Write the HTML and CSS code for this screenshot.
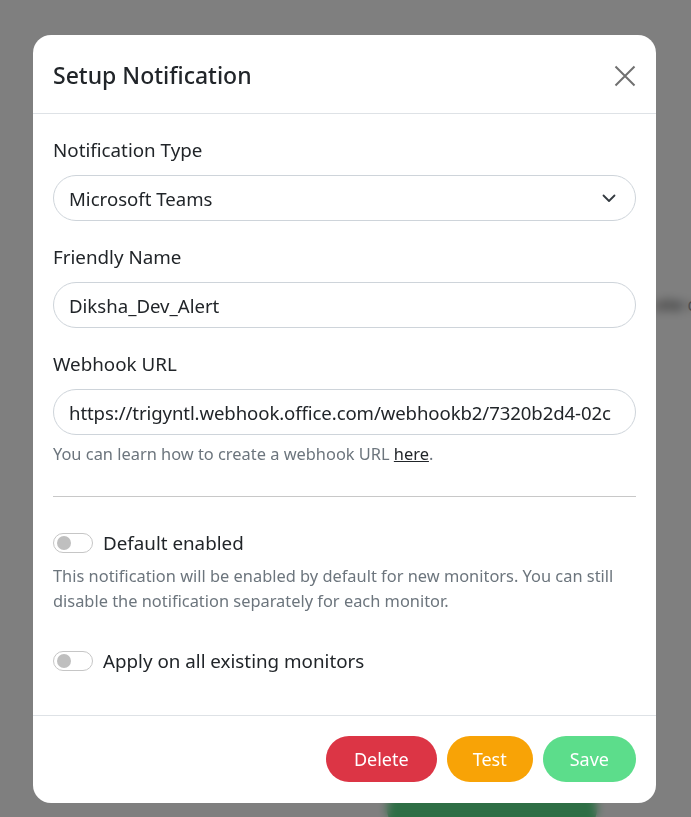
FILE: index.html
```html
<!DOCTYPE html>
<html lang="en">
<head>
<meta charset="utf-8">
<title>Setup Notification</title>
<link rel="stylesheet" href="styles.css">
</head>
<body>
<div class="page">
  <div class="page-text">ote c</div>
  <div class="page-btn"></div>
</div>
<div class="overlay">
  <div class="modal">
    <div class="modal-header">
      <h5 class="modal-title">Setup Notification</h5>
      <button class="btn-close" aria-label="Close">
        <svg width="22" height="22" viewBox="0 0 22 22"><path d="M1.5 1.5L20.5 20.5M20.5 1.5L1.5 20.5" stroke="#707070" stroke-width="2" fill="none"/></svg>
      </button>
    </div>
    <div class="modal-body">
      <label class="form-label">Notification Type</label>
      <div class="form-select">
        <span>Microsoft Teams</span>
        <svg width="14" height="9" viewBox="0 0 14 9"><path d="M1.5 1.5L7 7L12.5 1.5" stroke="#343a40" stroke-width="1.8" fill="none" stroke-linecap="round" stroke-linejoin="round"/></svg>
      </div>

      <label class="form-label gap">Friendly Name</label>
      <div class="form-control">Diksha_Dev_Alert</div>

      <label class="form-label gap">Webhook URL</label>
      <div class="form-control url"><span class="url-text">https://trigyntl.webhook.office.com/webhookb2/7320b2d4-02c</span></div>
      <div class="form-text">You can learn how to create a webhook URL <a href="#">here</a>.</div>

      <hr class="divider">

      <div class="switch-row first">
        <span class="switch"><span class="knob"></span></span>
        <span class="switch-label">Default enabled</span>
      </div>
      <div class="form-text desc">This notification will be enabled by default for new monitors. You can still disable the notification separately for each monitor.</div>

      <div class="switch-row second">
        <span class="switch"><span class="knob"></span></span>
        <span class="switch-label">Apply on all existing monitors</span>
      </div>
    </div>
    <div class="modal-footer">
      <button class="btn btn-danger">Delete</button>
      <button class="btn btn-warning">Test</button>
      <button class="btn btn-primary">Save</button>
    </div>
  </div>
</div>
</body>
</html>
```
FILE: styles.css
```css
* { box-sizing: border-box; }
html, body {
  margin: 0;
  padding: 0;
  width: 691px;
  height: 817px;
  overflow: hidden;
  font-family: "Noto Sans", "Open Sans", sans-serif;
  background: #ffffff;
}
.page {
  height: 817px;
  padding: 292px 0 0 655px;
}
.page-text {
  font-size: 18px;
  color: #333;
  white-space: nowrap;
}
.page-btn {
  margin: 470px 0 0 -268px;
  width: 210px;
  height: 46px;
  border-radius: 23px;
  background: #5cdd8b;
}
.overlay {
  position: fixed;
  inset: 0;
  background: rgba(0, 0, 0, 0.5);
  backdrop-filter: blur(5px);
  padding: 35px 0 0 33px;
}
.modal {
  width: 623px;
  height: 768px;
  background: #fff;
  border-radius: 18px;
  overflow: hidden;
  display: flex;
  flex-direction: column;
}
.modal-header {
  display: flex;
  align-items: center;
  justify-content: space-between;
  padding: 24px 20px 21px 20px;
  border-bottom: 1px solid #dee2e6;
}
.modal-title {
  margin: 0;
  font-size: 23px;
  line-height: 33px;
  font-weight: 500;
  color: #212529;
}
.btn-close {
  border: 0;
  background: none;
  padding: 0;
  width: 22px;
  height: 22px;
  display: flex;
  margin-right: 0;
}
.modal-body {
  flex: 1;
  padding: 22px 20px 0 20px;
  display: flex;
  flex-direction: column;
}
.form-label {
  display: block;
  font-size: 18.8px;
  line-height: 28px;
  color: #212529;
  margin-bottom: 11px;
}
.form-label.gap { margin-top: 22px; }
.form-select, .form-control {
  height: 46px;
  border: 1px solid #ced4da;
  border-radius: 23px;
  padding: 0 19px 0 15px;
  font-size: 18.6px;
  color: #212529;
  display: flex;
  align-items: center;
  justify-content: space-between;
  white-space: nowrap;
  overflow: hidden;
}
.form-control { justify-content: flex-start; }
.form-control.url { padding-right: 2px; }
.url-text {
  display: block;
  overflow: hidden;
  letter-spacing: -0.1px;
}
.form-text {
  font-size: 16.4px;
  line-height: 24px;
  color: #6c757d;
  margin-top: 7px;
}
.form-text a { color: #212529; }
.divider {
  margin: 30px 0 0 0;
  border: 0;
  border-top: 1px solid #c8c8c8;
}
.switch-row {
  display: flex;
  align-items: center;
  gap: 10px;
  height: 28px;
}
.switch-row.first { margin-top: 32px; }
.switch-row.second { margin-top: 34px; }
.switch {
  width: 40px;
  height: 20px;
  border: 1px solid #c6c6c6;
  border-radius: 10px;
  display: flex;
  align-items: center;
  padding-left: 3px;
  flex: none;
}
.knob {
  width: 14px;
  height: 14px;
  border-radius: 50%;
  background: #bfbfbf;
}
.switch-label {
  font-size: 18.8px;
  color: #212529;
}
.form-text.desc {
  line-height: 25px;
  margin-top: 6px;
}
.modal-footer {
  border-top: 1px solid #dee2e6;
  padding: 20px 20px 21px;
  display: flex;
  justify-content: flex-end;
  gap: 10px;
}
.btn {
  height: 46px;
  border: 0;
  border-radius: 23px;
  padding: 0 27px;
  font-family: inherit;
  font-size: 18px;
  color: #fff;
}
.btn-danger { background: #dc3545; padding: 0 28px; }
.btn-warning { background: #f8a306; padding: 0 26px; }
.btn-primary { background: #5cdd8b; padding: 0 27px; }
```
